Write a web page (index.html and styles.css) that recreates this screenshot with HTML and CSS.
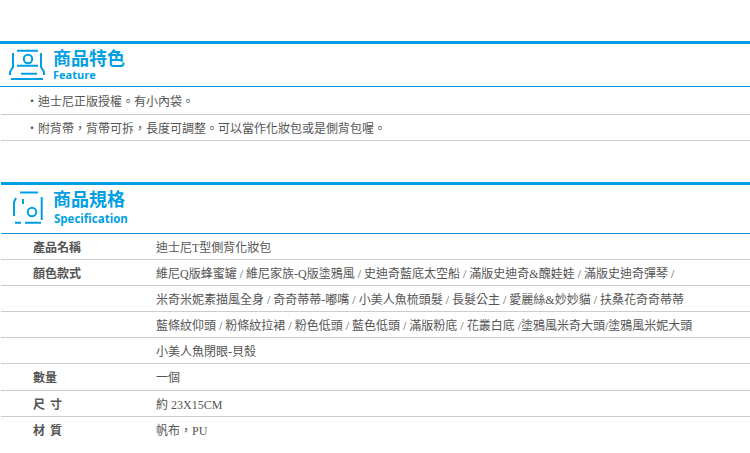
FILE: index.html
```html
<!DOCTYPE html>
<html lang="zh-Hant">
<head>
<meta charset="utf-8">
<title>商品特色</title>
<link rel="stylesheet" href="styles.css">
</head>
<body>
<section class="block block-feature">
  <header class="head head-feature">
    <svg class="icon icon-feature" width="36" height="32" viewBox="0 0 36 32" fill="none" stroke="#009fe3" stroke-width="2">
      <path d="M8 1.700H29M4 4V18L1 23V26M32 4V18L35 23V26"/>
      <circle cx="19" cy="10" r="4.200"/>
      <path d="M8 16.700H29M12 24.700H28M2 30H34"/>
    </svg>
    <div class="titles"><h2>商品特色</h2><p>Feature</p></div>
  </header>
  <ul class="notes">
    <li><span class="dot">‧</span>迪士尼正版授權。有小內袋。</li>
    <li><span class="dot">‧</span>附背帶，背帶可拆，長度可調整。可以當作化妝包或是側背包喔。</li>
  </ul>
</section>
<section class="block block-spec">
  <header class="head head-spec">
    <svg class="icon icon-spec" width="30" height="33" viewBox="0 0 30 33" fill="none" stroke="#009fe3" stroke-width="2">
      <path d="M7 1.500H25M28.700 6V29M1 11V25M1 11L3 7M10 8V13M2 31.700H8M12 31.700H28"/>
      <circle cx="19" cy="21" r="4.200"/>
    </svg>
    <div class="titles"><h2>商品規格</h2><p>Specification</p></div>
  </header>
  <div class="spec">
    <div class="row"><b>產品名稱</b><span>迪士尼T型側背化妝包</span></div>
    <div class="row"><b>顏色款式</b><span>維尼Q版蜂蜜罐 / 維尼家族-Q版塗鴉風 / 史迪奇藍底太空船 / 滿版史迪奇&amp;醜娃娃 / 滿版史迪奇彈琴 /</span></div>
    <div class="row"><b></b><span>米奇米妮素描風全身 / 奇奇蒂蒂-嘟嘴 / 小美人魚梳頭髮 / 長髮公主 / 愛麗絲&amp;妙妙貓 / 扶桑花奇奇蒂蒂</span></div>
    <div class="row"><b></b><span>藍條紋仰頭 / 粉條紋拉裙 / 粉色低頭 / 藍色低頭 / 滿版粉底 / 花叢白底 /塗鴉風米奇大頭/塗鴉風米妮大頭</span></div>
    <div class="row"><b></b><span>小美人魚閉眼-貝殼</span></div>
    <div class="row"><b>數量</b><span>一個</span></div>
    <div class="row"><b>尺 寸</b><span>約 23X15CM</span></div>
    <div class="row"><b>材 質</b><span>帆布，PU</span></div>
  </div>
</section>
</body>
</html>
```
FILE: styles.css
```css
html, body { margin: 0; padding: 0; background: #fff; }
body { width: 750px; height: 453px; overflow: hidden; font-family: "Liberation Serif", "Noto Sans CJK TC", serif; font-size: 12px; color: #555; }
.block-feature { padding-top: 41px; }
.block-spec { margin: 41px 0 0 1px; }
.head { display: flex; align-items: flex-start; }
.head-feature { height: 42px; border-top: 3px solid #009fe3; border-bottom: 1px solid #009fe3; }
.head-spec { height: 48px; border-top: 3px solid #009fe3; border-bottom: 1px solid #1a94d6; }
.icon { flex: none; }
.icon-feature { margin: 5px 8px 0 9px; }
.icon-spec { margin: 6px 10px 0 12px; }
.titles { font-family: "Noto Sans CJK TC", sans-serif; color: #009fe3; }
.titles h2 { margin: 0; font-size: 18px; line-height: 20px; font-weight: 700; padding-top: 3px; }
.titles p { margin: 0; font-family: "Open Sans", sans-serif; font-size: 11px; line-height: 15px; font-weight: 700; }
.head-spec .titles p { margin: 3px 0 0 1px; font-size: 11.500px; }
.notes { list-style: none; margin: 0 0 0 1px; padding: 0; }
.notes li { box-sizing: border-box; height: 28px; padding: 2px 0 0 25px; line-height: 26px; border-bottom: 1px solid #ccc; }
.notes li + li { height: 26px; padding-top: 1px; }
.dot { display: inline-block; width: 12px; }
.row { display: flex; height: 23.100px; padding-top: 2px; line-height: 25px; border-bottom: 1px solid #ccc; }
.row:last-child { border-bottom: 0; }
.row b { flex: none; width: 123px; padding-left: 32px; font-size: 12px; color: #555; font-weight: 700; word-spacing: 2px; }
.row span { font-size: 12px; white-space: nowrap; }
```
